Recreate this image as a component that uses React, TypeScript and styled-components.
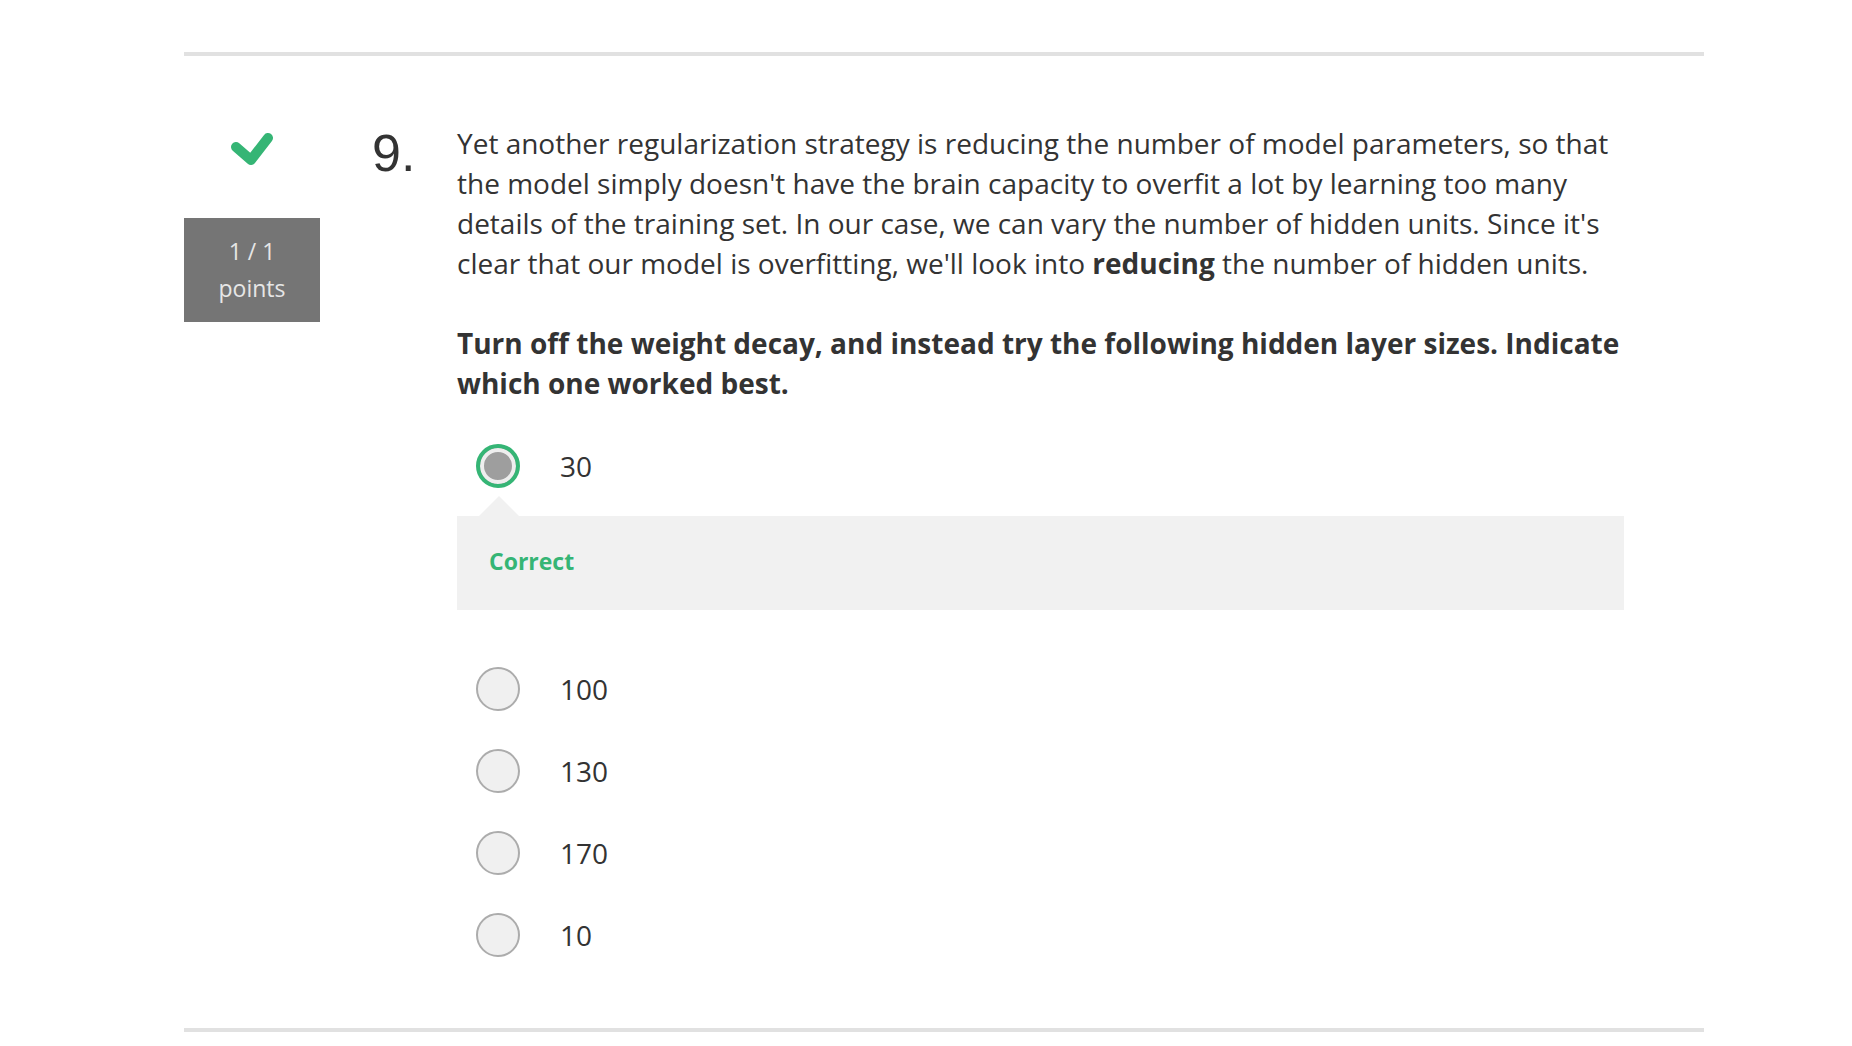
import React from "react";
import styled, { createGlobalStyle } from "styled-components";

const options = [
  { value: "30", selected: true, feedback: "Correct" },
  { value: "100" },
  { value: "130" },
  { value: "170" },
  { value: "10" },
];

const App = () => {
  return (
    <>
      <GlobalStyle />
      <Page>
        <Divider />
        <QuestionRow>
          <ScoreColumn>
            <CheckIcon viewBox="0 0 44 34" width={44} height={34}>
              <polyline
                points="6,15 21,28 38,6"
                fill="none"
                stroke="#35b575"
                strokeWidth={10}
                strokeLinecap="round"
                strokeLinejoin="round"
              />
            </CheckIcon>
            <PointsBox>
              <span>1 / 1</span>
              <span>points</span>
            </PointsBox>
          </ScoreColumn>

          <QuestionNumber>9.</QuestionNumber>

          <Content>
            <Paragraph>
              Yet another regularization strategy is reducing the number of model
              parameters, so that the model simply doesn't have the brain capacity
              to overfit a lot by learning too many details of the training set. In
              our case, we can vary the number of hidden units. Since it's clear
              that our model is overfitting, we'll look into <b>reducing</b> the
              number of hidden units.
            </Paragraph>
            <Instruction>
              Turn off the weight decay, and instead try the following hidden layer
              sizes. Indicate which one worked best.
            </Instruction>

            <OptionList>
              {options.map((opt) => (
                <OptionGroup key={opt.value} $hasFeedback={!!opt.feedback}>
                  <OptionRow>
                    <Radio $selected={!!opt.selected} />
                    <OptionLabel>{opt.value}</OptionLabel>
                  </OptionRow>
                  {opt.feedback && (
                    <Feedback>
                      <FeedbackText>{opt.feedback}</FeedbackText>
                    </Feedback>
                  )}
                </OptionGroup>
              ))}
            </OptionList>
          </Content>
        </QuestionRow>
        <Divider />
      </Page>
    </>
  );
};

export default App;

const GlobalStyle = createGlobalStyle`
  body {
    margin: 0;
    background: #ffffff;
    font-family: "Open Sans", "Liberation Sans", sans-serif;
    color: #333333;
  }
`;

const Page = styled.div`
  width: 1520px;
  margin-left: 184px;
  padding-top: 52px;
`;

const Divider = styled.div`
  height: 4px;
  background: #e1e1e1;
`;

const QuestionRow = styled.div`
  display: flex;
  align-items: flex-start;
  padding: 67px 0 71px;
`;

const ScoreColumn = styled.div`
  width: 136px;
  display: flex;
  flex-direction: column;
  align-items: center;
  padding-top: 9px;
`;

const CheckIcon = styled.svg`
  display: block;
  margin-bottom: 52px;
`;

const PointsBox = styled.div`
  width: 136px;
  height: 104px;
  box-sizing: border-box;
  padding: 15px 0;
  background: #757575;
  color: #e6e6e6;
  font-size: 23px;
  line-height: 37px;
  display: flex;
  flex-direction: column;
  align-items: center;
`;

const QuestionNumber = styled.div`
  width: 85px;
  margin-left: 52px;
  margin-top: 4px;
  font-family: "Liberation Sans", Arial, sans-serif;
  font-size: 52px;
  line-height: 52px;
  color: #333333;
`;

const Content = styled.div`
  width: 1167px;
  display: flex;
  flex-direction: column;
`;

const Paragraph = styled.p`
  margin: 0;
  font-size: 28px;
  line-height: 40px;
  color: #333333;

  b {
    font-weight: 700;
  }
`;

const Instruction = styled(Paragraph)`
  margin-top: 40px;
  font-weight: 700;
`;

const OptionList = styled.div`
  display: flex;
  flex-direction: column;
  gap: 38px;
  margin-top: 41px;
`;

const OptionGroup = styled.div<{ $hasFeedback: boolean }>`
  display: flex;
  flex-direction: column;
  margin-bottom: ${(p) => (p.$hasFeedback ? "19px" : "0")};
`;

const OptionRow = styled.div`
  display: flex;
  align-items: center;
  gap: 40px;
  padding-left: 19px;
  height: 44px;
`;

const Radio = styled.span<{ $selected: boolean }>`
  width: 44px;
  height: 44px;
  box-sizing: border-box;
  border-radius: 50%;
  flex-shrink: 0;
  border: ${(p) => (p.$selected ? "4px solid #35b575" : "2px solid #acacac")};
  background: ${(p) => (p.$selected ? "#9e9e9e" : "#f0f0f0")};
  box-shadow: ${(p) => (p.$selected ? "inset 0 0 0 4px #eeeeee" : "none")};
`;

const OptionLabel = styled.span`
  font-size: 28px;
  line-height: 40px;
  color: #333333;
`;

const Feedback = styled.div`
  position: relative;
  margin-top: 28px;
  height: 94px;
  box-sizing: border-box;
  background: #f1f1f1;
  display: flex;
  align-items: center;
  padding: 0 0 4px 32px;

  &::before {
    content: "";
    position: absolute;
    top: -20px;
    left: 22px;
    border-left: 20px solid transparent;
    border-right: 20px solid transparent;
    border-bottom: 20px solid #f1f1f1;
  }
`;

const FeedbackText = styled.span`
  font-size: 23px;
  font-weight: 700;
  color: #35b575;
`;
